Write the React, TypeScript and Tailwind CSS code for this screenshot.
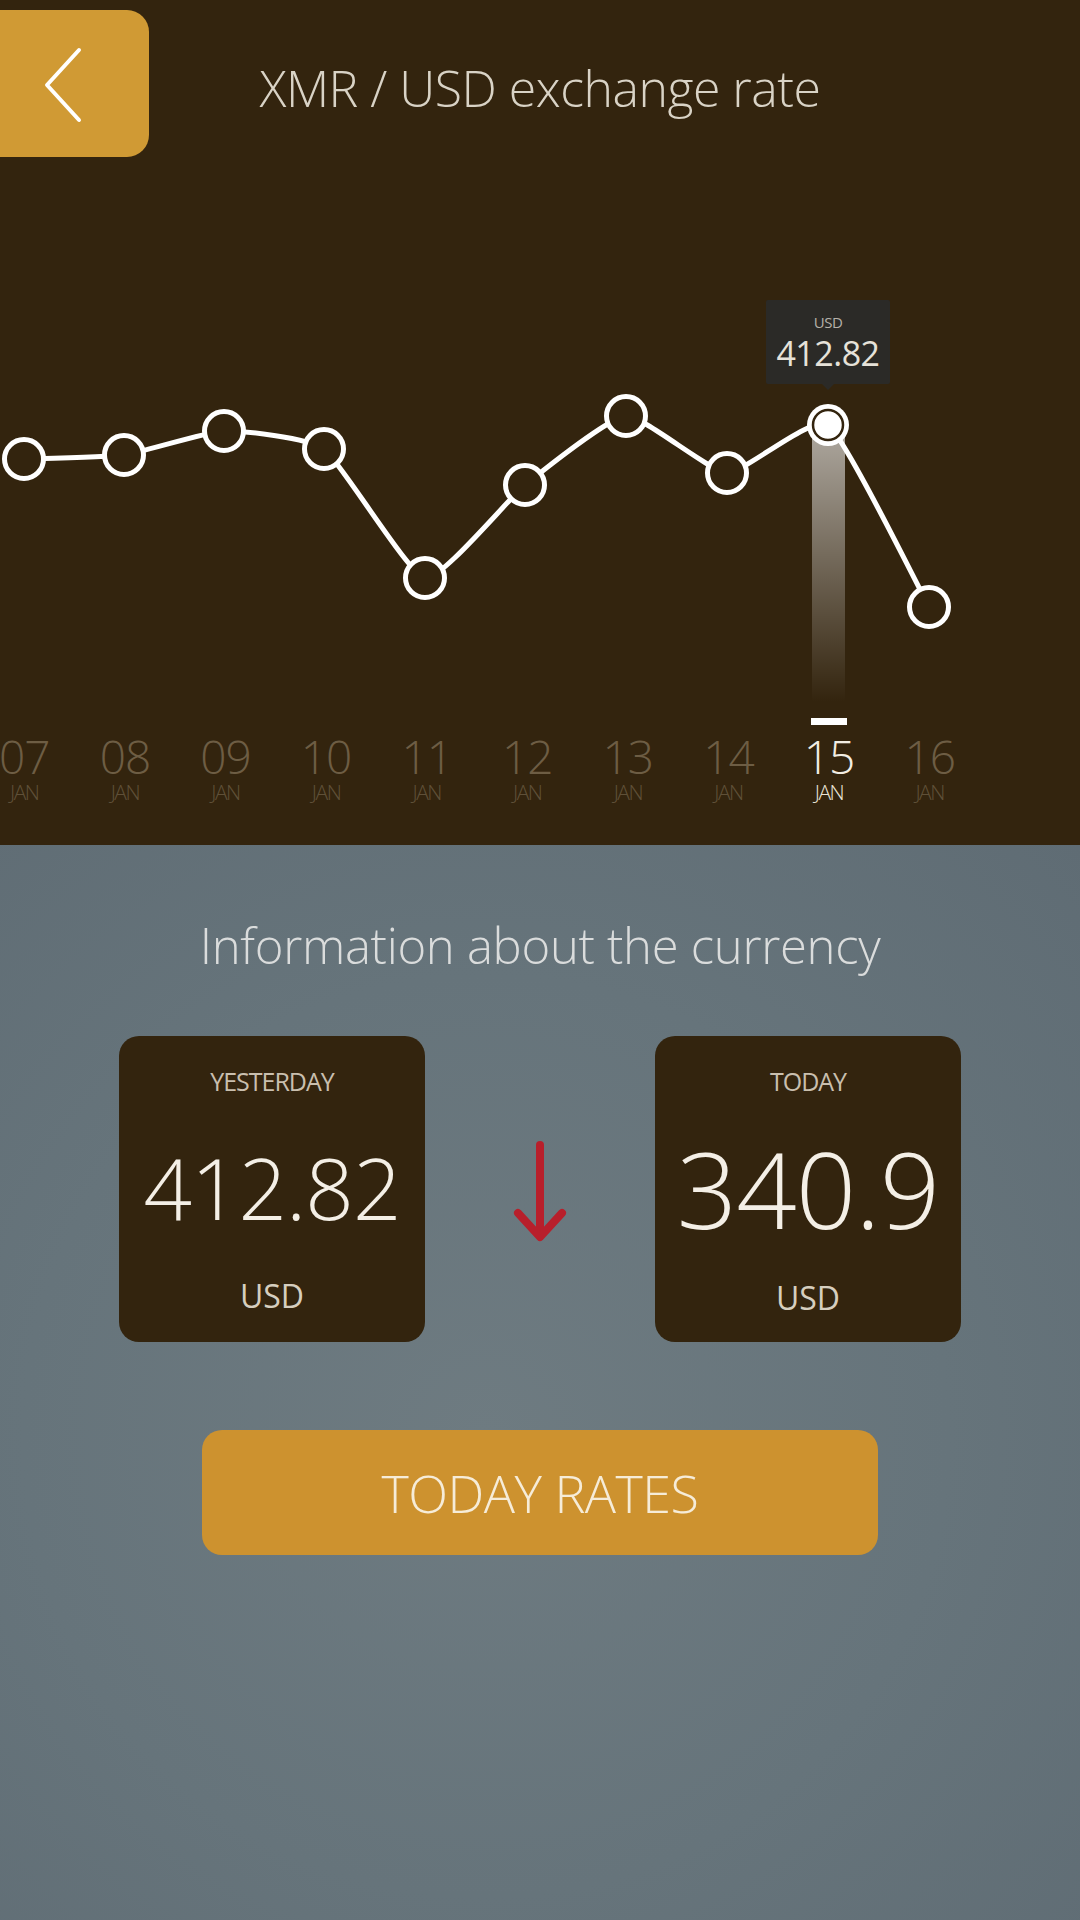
import React from "react";

const pts: [number, number][] = [
  [24, 292],
  [124, 288],
  [224, 264],
  [324, 282],
  [425, 411],
  [525, 318],
  [626, 249],
  [727, 306],
  [828, 258],
  [929, 440],
];

const days = ["07", "08", "09", "10", "11", "12", "13", "14", "15", "16"];

function buildPath(p: [number, number][]) {
  const t = 0.08;
  let d = `M${p[0][0]},${p[0][1]}`;
  for (let i = 0; i < p.length - 1; i++) {
    const p0 = p[i - 1] || p[i];
    const p1 = p[i];
    const p2 = p[i + 1];
    const p3 = p[i + 2] || p2;
    const c1x = p1[0] + (p2[0] - p0[0]) * t;
    const c1y = p1[1] + (p2[1] - p0[1]) * t;
    const c2x = p2[0] - (p3[0] - p1[0]) * t;
    const c2y = p2[1] - (p3[1] - p1[1]) * t;
    d += ` C${c1x},${c1y} ${c2x},${c2y} ${p2[0]},${p2[1]}`;
  }
  return d;
}

function Chart() {
  const d = buildPath(pts);
  return (
    <svg width="1080" height="563" viewBox="0 0 1080 563" className="block">
      <defs>
        <linearGradient id="hl" x1="0" y1="0" x2="0" y2="1">
          <stop offset="0%" stopColor="#ffffff" stopOpacity="0.6" />
          <stop offset="100%" stopColor="#ffffff" stopOpacity="0" />
        </linearGradient>
      </defs>
      <rect x="812" y="263" width="33" height="272" fill="url(#hl)" />
      <path d={d} fill="none" stroke="#ffffff" strokeWidth="5" strokeLinejoin="round" />
      {pts.map(([x, y], i) =>
        i === 8 ? (
          <g key={i}>
            <circle cx={x} cy={y} r="21" fill="#ffffff" />
            <circle cx={x} cy={y} r="15" fill="#ffffff" stroke="#33240e" strokeWidth="2.5" />
          </g>
        ) : (
          <circle key={i} cx={x} cy={y} r="19.5" fill="#33240e" stroke="#ffffff" strokeWidth="5" />
        )
      )}
      <rect x="811" y="551" width="36" height="7" fill="#ffffff" />
    </svg>
  );
}

export default function App() {
  const font = { fontFamily: '"Open Sans", "Noto Sans", sans-serif' };
  return (
    <div className="w-[1080px] h-[1920px] flex flex-col overflow-hidden" style={font}>
      <div className="h-[845px] bg-[#33240e] flex flex-col">
        <div className="grid grid-cols-[149px_1fr_149px] pt-[10px] h-[167px]">
          <div className="h-[147px] bg-[#d09a34] rounded-r-[22px] flex items-center pl-[39px]">
            <svg width="50" height="80" viewBox="0 0 50 80">
              <polyline points="40,6 8,41 40,76" fill="none" stroke="#ffffff" strokeWidth="4" strokeLinecap="round" strokeLinejoin="round" />
            </svg>
          </div>
          <div className="flex items-center justify-center h-[147px] pt-[9px]">
            <span className="text-[50px] font-light text-[#d9d3c6] tracking-[-0.5px] whitespace-nowrap">XMR / USD exchange rate</span>
          </div>
          <div />
        </div>
        <div className="relative">
          <Chart />
          <div className="absolute left-[766px] top-[133px] w-[124px] h-[84px] bg-[#2b2a27] rounded-[2px] flex flex-col items-center justify-center">
            <span className="text-[15px] leading-none text-[#b5b1a9] tracking-[-0.5px]">USD</span>
            <span className="text-[34px] leading-none mt-[6px] text-[#e6e2d9] tracking-[-0.5px]">412.82</span>
            <div className="absolute bottom-[-6px] left-1/2 -translate-x-1/2 w-0 h-0 border-l-[6px] border-r-[6px] border-t-[6px] border-l-transparent border-r-transparent border-t-[#2b2a27]" />
          </div>
        </div>
        <div className="flex ml-[-26px] mt-[6px]">
          {days.map((dd, i) => (
            <div key={dd} className="w-[100.6px] flex flex-col items-center">
              <span className={`text-[46px] font-light leading-[40px] tracking-[-1px] ${i === 8 ? "text-[#f2ede3]" : "text-[#6d5d44]"}`}>{dd}</span>
              <span className={`text-[21px] font-light leading-[20px] mt-[6px] tracking-[-1.5px] ${i === 8 ? "text-[#e9e3d6]" : "text-[#5f5038]"}`}>JAN</span>
            </div>
          ))}
        </div>
      </div>
      <div className="flex-1 flex flex-col items-center bg-[radial-gradient(ellipse_at_45%_55%,#6e7b81_0%,#66747b_55%,#5f6c74_100%)]">
        <div className="mt-[76px] text-[49px] font-light text-[#dadcdc] tracking-[-0.3px] leading-none whitespace-nowrap">Information about the currency</div>
        <div className="mt-[66px] w-[842px] flex items-center justify-between">
          <div className="w-[306px] h-[306px] bg-[#33240e] rounded-[20px] flex flex-col items-center">
            <span className="mt-[33px] text-[25px] text-[#c9bfae] leading-none tracking-[-1px]">YESTERDAY</span>
            <span className="mt-[51px] text-[85px] font-light text-[#f4efe6] leading-none tracking-[-1px]">412.82</span>
            <span className="mt-[50px] text-[32px] text-[#d6cebf] leading-none">USD</span>
          </div>
          <svg width="60" height="104" viewBox="0 0 60 104" className="mt-[8px]">
            <line x1="30" y1="4" x2="30" y2="94" stroke="#b81f2b" strokeWidth="8" strokeLinecap="round" />
            <polyline points="8,72 30,96 52,72" fill="none" stroke="#b81f2b" strokeWidth="8" strokeLinecap="round" strokeLinejoin="round" />
          </svg>
          <div className="w-[306px] h-[306px] bg-[#33240e] rounded-[20px] flex flex-col items-center">
            <span className="mt-[33px] text-[25px] text-[#c9bfae] leading-none tracking-[-1px]">TODAY</span>
            <span className="mt-[41px] text-[106px] font-light text-[#f4efe6] leading-none tracking-[-1px]">340.9</span>
            <span className="mt-[41px] text-[32px] text-[#d6cebf] leading-none">USD</span>
          </div>
        </div>
        <div className="mt-[88px] w-[676px] h-[125px] bg-[#cd922f] rounded-[20px] flex items-center justify-center">
          <span className="text-[52px] font-light text-[#f6ecd8] tracking-[-0.5px] leading-none">TODAY RATES</span>
        </div>
      </div>
    </div>
  );
}
